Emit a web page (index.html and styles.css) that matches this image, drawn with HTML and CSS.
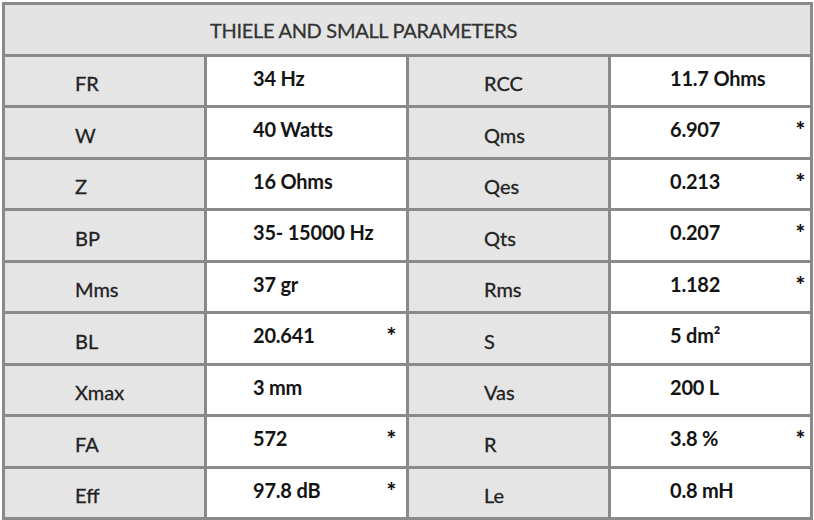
FILE: index.html
```html
<!DOCTYPE html>
<html>
<head>
<meta charset="utf-8">
<link rel="stylesheet" href="styles.css">
</head>
<body>
<div class="table">
  <div class="head">THIELE AND SMALL PARAMETERS</div>

  <div class="lbl l1">FR</div><div class="val v1"><span class="txt">34 Hz</span></div>
  <div class="lbl l2">RCC</div><div class="val v2"><span class="txt">11.7 Ohms</span></div>

  <div class="lbl l1">W</div><div class="val v1"><span class="txt">40 Watts</span></div>
  <div class="lbl l2">Qms</div><div class="val v2"><span class="txt">6.907</span><span class="ast">*</span></div>

  <div class="lbl l1">Z</div><div class="val v1"><span class="txt">16 Ohms</span></div>
  <div class="lbl l2">Qes</div><div class="val v2"><span class="txt">0.213</span><span class="ast">*</span></div>

  <div class="lbl l1">BP</div><div class="val v1"><span class="txt">35- 15000 Hz</span></div>
  <div class="lbl l2">Qts</div><div class="val v2"><span class="txt">0.207</span><span class="ast">*</span></div>

  <div class="lbl l1">Mms</div><div class="val v1"><span class="txt">37 gr</span></div>
  <div class="lbl l2">Rms</div><div class="val v2"><span class="txt">1.182</span><span class="ast">*</span></div>

  <div class="lbl l1">BL</div><div class="val v1"><span class="txt">20.641</span><span class="ast">*</span></div>
  <div class="lbl l2">S</div><div class="val v2"><span class="txt">5 dm²</span></div>

  <div class="lbl l1">Xmax</div><div class="val v1"><span class="txt">3 mm</span></div>
  <div class="lbl l2">Vas</div><div class="val v2"><span class="txt">200 L</span></div>

  <div class="lbl l1">FA</div><div class="val v1"><span class="txt">572</span><span class="ast">*</span></div>
  <div class="lbl l2">R</div><div class="val v2"><span class="txt">3.8 %</span><span class="ast">*</span></div>

  <div class="lbl l1">Eff</div><div class="val v1"><span class="txt">97.8 dB</span><span class="ast">*</span></div>
  <div class="lbl l2">Le</div><div class="val v2"><span class="txt">0.8 mH</span></div>
</div>
</body>
</html>
```
FILE: styles.css
```css
html, body {
  margin: 0;
  padding: 0;
  background: #ffffff;
  overflow: hidden;
}

body {
  padding: 2px 0 0 2px;
  font-family: Lato, "Liberation Sans", sans-serif;
  color: #1e1e1e;
}

.table {
  width: 811px;
  box-sizing: border-box;
  display: grid;
  grid-template-columns: repeat(4, 199px);
  grid-auto-rows: 48.5px;
  gap: 3px;
  padding: 3px;
  background: #8a8a8a;
}

.head {
  grid-column: 1 / span 4;
  background: #e4e4e4;
  display: flex;
  align-items: center;
  padding-left: 205px;
  padding-top: 2px;
  box-sizing: border-box;
  font-size: 20px;
  color: #333333;
  letter-spacing: -0.3px;
  -webkit-text-stroke: 0.3px #333333;
}

.lbl {
  background: #e5e5e5;
  display: flex;
  align-items: center;
  font-size: 20px;
  color: #222222;
  -webkit-text-stroke: 0.3px #222222;
  padding-top: 5px;
  box-sizing: border-box;
}

.l1 { padding-left: 70px; }
.l2 { padding-left: 75px; }

.val {
  background: #ffffff;
  display: flex;
  align-items: center;
  font-size: 20px;
  font-weight: bold;
  color: #141414;
  letter-spacing: -0.2px;
  padding-bottom: 6px;
  box-sizing: border-box;
}

.v1 { padding-left: 46px; padding-right: 10px; }
.v2 { padding-left: 59px; padding-right: 5px; }

.txt { flex: 1; }

.ast {
  font-size: 23px;
  font-weight: 900;
  margin-top: 0;
}
```
